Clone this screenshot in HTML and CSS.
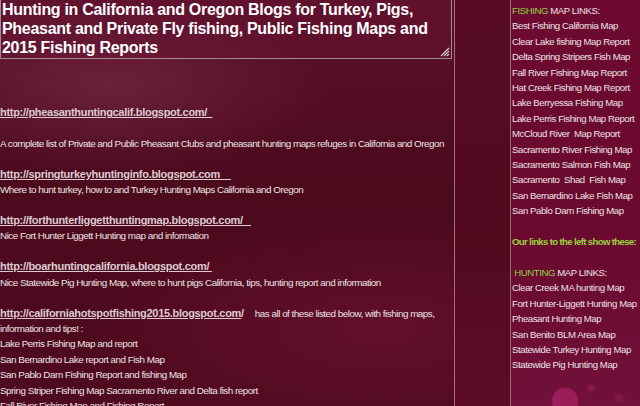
FILE: index.html
```html
<!DOCTYPE html>
<html lang="en">
<head>
<meta charset="UTF-8">
<meta name="viewport" content="width=device-width, initial-scale=1.0">
<title>Hunting in California and Oregon Blogs</title>
<link rel="stylesheet" href="styles.css">
</head>
<body>
<div class="page">
  <div class="main-column">
    <div class="title-box">
      <h1 class="post-title">Hunting in California and Oregon Blogs for Turkey, Pigs, Pheasant and Private Fly fishing, Public Fishing Maps and 2015 Fishing Reports</h1>
      <svg class="grip" width="10" height="10" viewBox="0 0 10 10">
        <path d="M9 1 L1 9 M9 4 L4 9 M9 7 L7 9" stroke="#d8c8cc" stroke-width="1.2"/>
      </svg>
    </div>
    <div class="post-body">
      <br><br><br>
      <a class="blog-link" href="#">http://pheasanthuntingcalif.blogspot.com/&nbsp;&nbsp;</a><br>
      <br>
      A complete list of Private and Public Pheasant Clubs and pheasant hunting maps refuges in California and Oregon<br>
      <br>
      <a class="blog-link" href="#">http://springturkeyhuntinginfo.blogspot.com&nbsp;&nbsp;&nbsp;&nbsp;</a><br>
      Where to hunt turkey, how to and Turkey Hunting Maps California and Oregon<br>
      <br>
      <a class="blog-link" href="#">http://forthunterliggetthuntingmap.blogspot.com/&nbsp;&nbsp;&nbsp;</a><br>
      Nice Fort Hunter Liggett Hunting map and information<br>
      <br>
      <a class="blog-link" href="#">http://boarhuntingcalifornia.blogspot.com/&nbsp;</a><br>
      Nice Statewide Pig Hunting Map, where to hunt pigs California, tips, hunting report and information<br>
      <br>
      <a class="blog-link" href="#">http://californiahotspotfishing2015.blogspot.com</a><b class="slash">/</b>&nbsp;&nbsp;&nbsp;&nbsp; has all of these listed below, with fishing maps,<br>
      information and tips! :<br>
      Lake Perris Fishing Map and report<br>
      San Bernardino Lake report and Fish Map<br>
      San Pablo Dam Fishing Report and fishing Map<br>
      Spring Striper Fishing Map Sacramento River and Delta fish report<br>
      Fall River Fishing Map and Fishing Report<br>
    </div>
  </div>
  <div class="gap-column"></div>
  <div class="sidebar">
    <div class="side-heading"><span class="green">FISHING</span> MAP LINKS:</div>
    <a class="side-link" href="#">Best Fishing California Map</a>
    <a class="side-link" href="#">Clear Lake fishing Map Report</a>
    <a class="side-link" href="#">Delta Spring Stripers Fish Map</a>
    <a class="side-link" href="#">Fall River Fishing Map Report</a>
    <a class="side-link" href="#">Hat Creek Fishing Map Report</a>
    <a class="side-link" href="#">Lake Berryessa Fishing Map</a>
    <a class="side-link" href="#">Lake Perris Fishing Map Report</a>
    <a class="side-link" href="#">McCloud River&nbsp; Map Report</a>
    <a class="side-link" href="#">Sacramento River Fishing Map</a>
    <a class="side-link" href="#">Sacramento Salmon Fish Map</a>
    <a class="side-link" href="#">Sacramento&nbsp; Shad&nbsp; Fish Map</a>
    <a class="side-link" href="#">San Bernardino Lake Fish Map</a>
    <a class="side-link" href="#">San Pablo Dam Fishing Map</a>
    <div class="side-spacer"></div>
    <div class="side-note">Our links to the left show these:</div>
    <div class="side-spacer"></div>
    <div class="side-heading">&nbsp;<span class="green">HUNTING</span> MAP LINKS:</div>
    <a class="side-link" href="#">Clear Creek MA hunting Map</a>
    <a class="side-link" href="#">Fort Hunter-Liggett Hunting Map</a>
    <a class="side-link" href="#">Pheasant Hunting Map</a>
    <a class="side-link" href="#">San Benito BLM Area Map</a>
    <a class="side-link" href="#">Statewide Turkey Hunting Map</a>
    <a class="side-link" href="#">Statewide Pig Hunting Map</a>
  </div>
</div>
</body>
</html>
```

FILE: styles.css
```css
body {
  margin: 0;
  font-family: "Liberation Sans", Arial, sans-serif;
  background-color: #4e0a1e;
  background-image:
    radial-gradient(ellipse 220px 90px at 110px 85px, rgba(140, 60, 95, 0.4), rgba(140, 60, 95, 0) 100%),
    radial-gradient(ellipse 300px 110px at 380px 330px, rgba(130, 20, 60, 0.4), rgba(130, 20, 60, 0) 100%),
    linear-gradient(180deg, #5a1029 0%, #4c0a1d 45%, #4e0a1f 100%);
  height: 406px;
  overflow: hidden;
  color: #ece2e4;
}
.page {
  display: flex;
  height: 406px;
}
.main-column {
  width: 454px;
  border-right: 1px solid #a07080;
  flex-shrink: 0;
}
.title-box {
  position: relative;
  width: 450px;
  margin-top: -3px;
  border: 1px solid #a88890;
  background-color: rgba(110, 20, 55, 0.35);
}
.post-title {
  margin: 0;
  padding: 2px 2px 1px 1px;
  font-size: 16px;
  line-height: 19px;
  font-weight: bold;
  letter-spacing: -0.3px;
  color: #ffffff;
}
.grip {
  position: absolute;
  right: 1px;
  bottom: 1px;
}
.post-body {
  font-size: 9.9px;
  line-height: 15.4px;
  letter-spacing: -0.5px;
  color: #ece2e4;
  white-space: nowrap;
}
.blog-link {
  font-size: 11px;
  font-weight: bold;
  letter-spacing: -0.3px;
  color: #dccad2;
  text-decoration: underline;
}
.slash {
  font-size: 11px;
  color: #dccad2;
}
.gap-column {
  width: 55px;
  flex-shrink: 0;
  border-right: 1px solid #9a6878;
  background: linear-gradient(180deg, #560b22 0%, #520a1f 60%, #5c0c27 100%);
}
.sidebar {
  flex: 1;
  padding-top: 3px;
  padding-left: 1px;
  display: flex;
  flex-direction: column;
  font-size: 9.6px;
  line-height: 15.4px;
  letter-spacing: -0.42px;
  white-space: nowrap;
  overflow: hidden;
  background-color: #690a2d;
  background-image:
    radial-gradient(circle 14px at 54px 401px, #9c1d5a 0%, #9c1d5a 88%, rgba(156, 29, 90, 0) 100%),
    radial-gradient(circle 5px at 80px 388px, rgba(160, 30, 92, 0.9) 0%, rgba(160, 30, 92, 0) 100%),
    radial-gradient(circle 7px at 108px 398px, rgba(150, 28, 86, 0.7) 0%, rgba(150, 28, 86, 0) 100%),
    linear-gradient(180deg, #6c0a2f 0%, #6a0a2e 60%, #71103a 100%);
}
.side-heading {
  color: #ece2e4;
}
.green {
  color: #8cd24a;
}
.side-link {
  color: #ece2e4;
  text-decoration: none;
}
.side-spacer {
  height: 15.4px;
}
.side-note {
  color: #98d040;
  font-weight: bold;
  letter-spacing: -0.65px;
}
```
